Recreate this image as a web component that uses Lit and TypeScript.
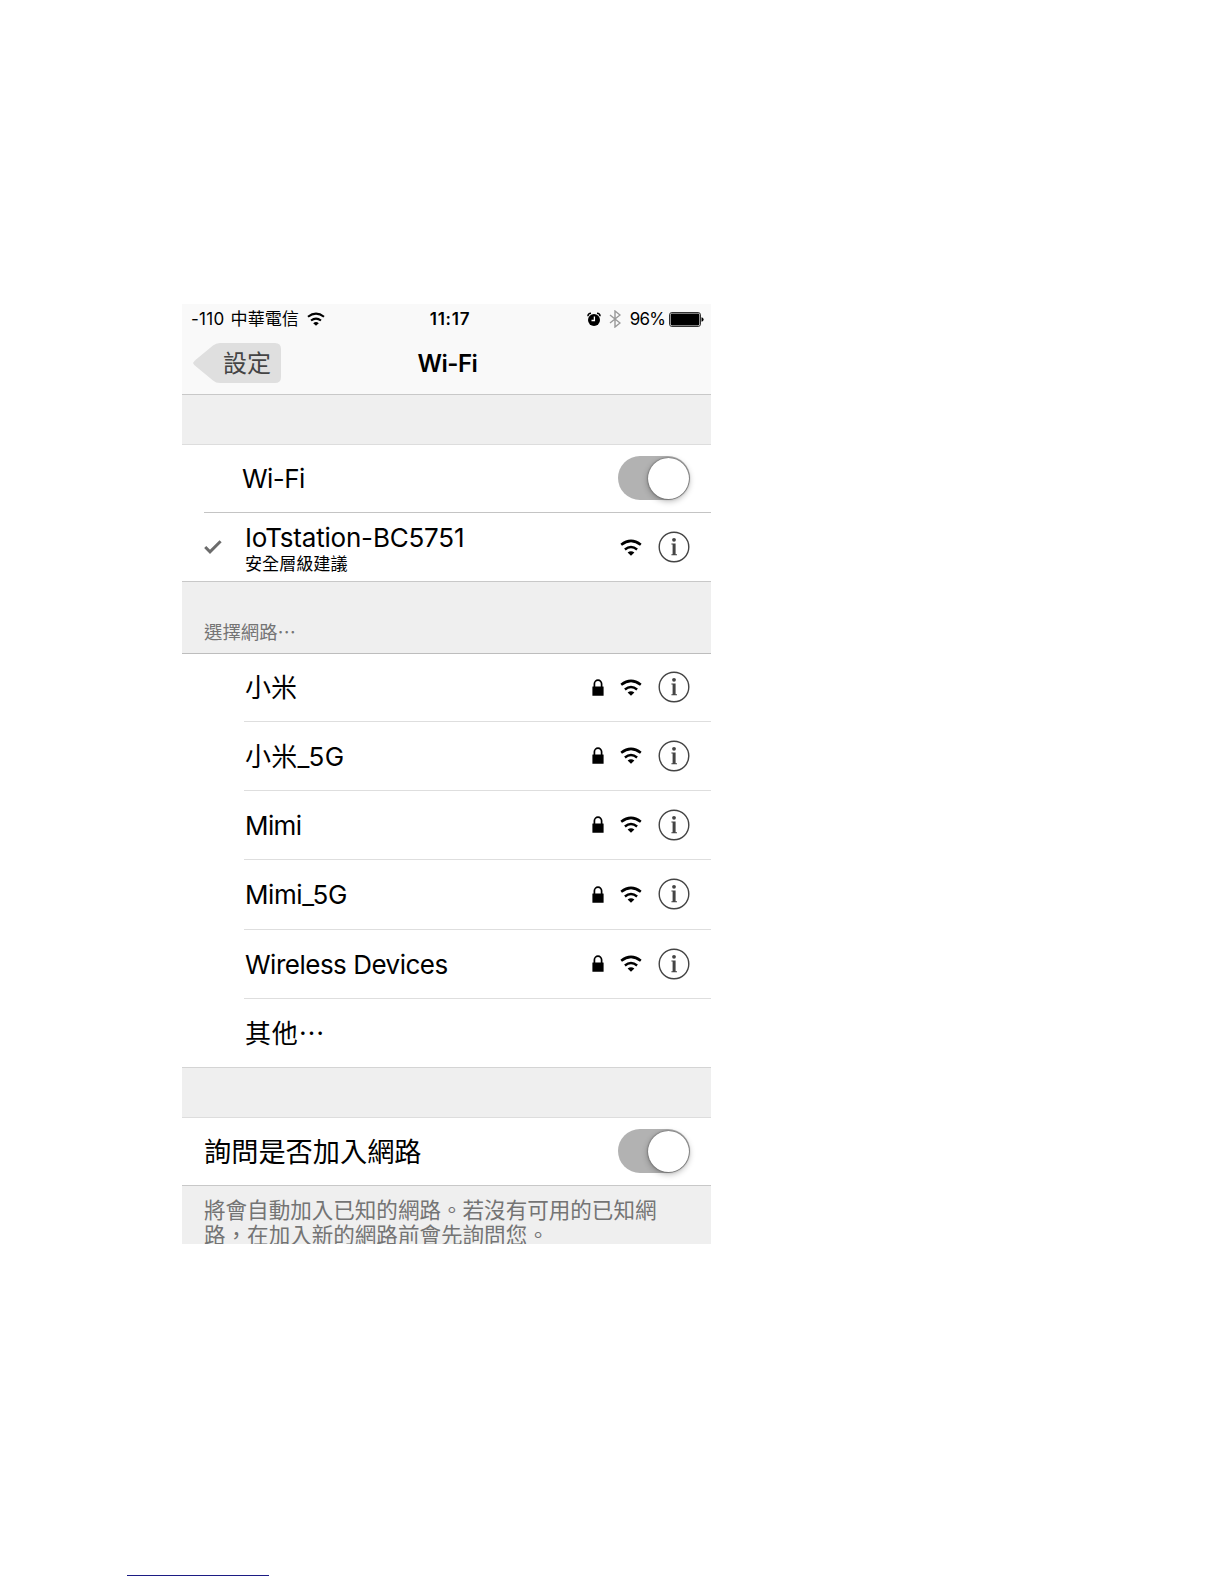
import { LitElement, html, css, svg, nothing } from "lit";
import { customElement } from "lit/decorators.js";

const wifiGlyph = svg`
  <path d="M1.2 5.8Q11 -2 20.8 5.8" fill="none" stroke="#000" stroke-width="2.5"/>
  <path d="M4.9 10.4Q11 5.6 17.1 10.4" fill="none" stroke="#000" stroke-width="2.5"/>
  <path d="M7.6 13.6Q11 10.8 14.4 13.6L11 16.8Z" fill="#000"/>`;

@customElement("toggle-switch")
class ToggleSwitch extends LitElement {
  static styles = css`
    :host { display: block; margin-bottom: 1px; }
    .track { display: flex; justify-content: flex-end; box-sizing: border-box; width: 72px; height: 44px; padding: 2px 1px 1px; border-radius: 22px; background: #b2b2b2; }
    .knob { width: 41px; height: 41px; border-radius: 50%; background: #fff; box-shadow: 0 2px 6px rgba(0,0,0,.3), 0 0 2px rgba(0,0,0,.6); }
  `;
  render() { return html`<div class="track"><div class="knob"></div></div>`; }
}

@customElement("network-row")
class NetworkRow extends LitElement {
  static properties = {
    name: {}, note: {}, track: { type: Number }, secure: { type: Boolean }, checked: { type: Boolean }, plain: { type: Boolean },
  };
  declare name: string;
  declare note: string;
  declare track: number;
  declare secure: boolean;
  declare checked: boolean;
  declare plain: boolean;
  static styles = css`
    :host { display: flex; align-items: center; box-sizing: border-box; padding-right: 21px; }
    svg { display: block; flex: none; }
    .mark { width: 63px; box-sizing: border-box; padding-left: 22px; }
    .label { flex: 1; display: flex; flex-direction: column; white-space: nowrap; font-size: 26px; line-height: 32px; padding-top: 1px; }
    .cjk { font-family: "Noto Sans CJK TC", sans-serif; padding-bottom: 3px; }
    .note { font-family: "Noto Sans CJK TC", sans-serif; font-size: 17.1px; line-height: 20px; margin-top: -1px; padding-bottom: 1px; }
    .icons { display: flex; align-items: center; }
    .secured { padding-bottom: 1px; }
    .lock { margin-right: 16px; }
    .wifi { margin-right: 16px; }
  `;
  render() {
    return html`
      <div class="mark">${this.checked ? html`<svg width="18" height="16" viewBox="0 0 18 16"><path d="M1.2 8L6 12.8L16.6 2.2" fill="none" stroke="#6c6c6c" stroke-width="3"/></svg>` : nothing}</div>
      <div class="label"><span class=${this.plain ? "cjk" : ""} style="letter-spacing:${this.track ?? 0}px">${this.name}</span>${this.note ? html`<span class="note">${this.note}</span>` : nothing}</div>
      ${this.plain ? nothing : html`<div class="icons ${this.secure ? "secured" : ""}">
        ${this.secure ? html`<svg class="lock" width="12" height="17" viewBox="0 0 12 17"><path d="M2.4 8V4.8a3.6 3.6 0 0 1 7.2 0V8" fill="none" stroke="#000" stroke-width="1.7"/><rect x=".4" y="7.4" width="11.2" height="9.4" rx=".4"/></svg>` : nothing}
        <svg class="wifi" width="22" height="17" viewBox="0 0 22 17">${wifiGlyph}</svg>
        <svg width="32" height="32" viewBox="0 0 32 32" fill="#444"><circle cx="16" cy="16" r="14.8" fill="none" stroke="#444" stroke-width="1.4"/><circle cx="16" cy="8.8" r="1.9"/><path d="M13.4 12.6h4.2v10.7h1.4v1h-5.6v-1h1.2v-9.7h-1.2z"/></svg>
      </div>`}`;
  }
}

@customElement("app-root")
class AppRoot extends LitElement {
  static styles = css`
    :host { display: flex; flex-direction: column; box-sizing: border-box; width: 1224px; height: 1584px; overflow: hidden; background: #fff; padding: 304px 0 8px; color: #000; font-family: Inter, "Noto Sans CJK TC", sans-serif; }
    * { box-sizing: border-box; }
    svg { display: block; flex: none; }
    .phone { width: 529px; height: 940px; margin-left: 182px; overflow: hidden; background: #efefef; white-space: nowrap; }
    .top { height: 91px; background: #f9f9f9; border-bottom: 1px solid #c8c8c8; }
    .status { height: 30px; display: grid; grid-template-columns: 1fr auto 1fr; align-items: center; padding: 0 7px 0 9px; font-size: 17px; line-height: 22px; }
    .carrier, .right { display: flex; align-items: center; }
    .rssi { letter-spacing: .3px; margin-right: 6px; }
    .operator { font-family: "Noto Sans CJK TC", sans-serif; font-size: 17.1px; line-height: 20px; padding-bottom: 2px; margin-right: 8px; }
    .time { font-weight: 600; letter-spacing: .75px; padding-left: 5px; }
    .right { justify-content: flex-end; }
    .alarm { margin-right: 8px; }
    .bt { margin-right: 9px; }
    .pct { margin-right: 4px; letter-spacing: -.85px; }
    .nav { height: 59px; display: grid; grid-template-columns: 1fr auto 1fr; align-items: center; padding: 0 11px; }
    .back { display: grid; width: 88px; height: 40px; margin-bottom: 1px; }
    .back > * { grid-area: 1 / 1; }
    .back span { padding-left: 30px; font-family: "Noto Sans CJK TC", sans-serif; font-size: 24px; line-height: 38px; color: #444; }
    .title { font-weight: 600; font-size: 24px; line-height: 30px; letter-spacing: -.5px; padding: 1px 0 0 2px; }
    .gap { height: 50px; border-bottom: 1px solid #ddd; }
    .main { display: flex; align-items: center; justify-content: space-between; background: #fff; padding-right: 21px; }
    .wifi-row { height: 67px; padding-left: 60px; font-size: 26px; letter-spacing: -.55px; }
    .sep { background: #fff; padding-left: 22px; }
    .sep div { height: 1px; background: #c4c4c4; }
    .joined { height: 69px; background: #fff; border-bottom: 1px solid #c8c8c8; }
    .heading { height: 72px; display: flex; align-items: flex-end; padding: 0 0 9px 22px; border-bottom: 1px solid #bdbdbd; color: #747474; font-family: "Noto Sans CJK TC", sans-serif; font-size: 18.4px; line-height: 26px; }
    .list { background: #fff; border-bottom: 1px solid #d4d4d4; display: grid; grid-template-rows: 68px 69px 69px 70px 69px 68px; height: 414px; }
    .item { display: grid; grid-template-rows: 1fr 1px; }
    .rule { margin-left: 62px; background: #dedede; }
    .item:last-child .rule { background: none; }
    .ask { height: 68px; border-bottom: 1px solid #c8c8c8; padding-left: 22px; font-family: "Noto Sans CJK TC", sans-serif; font-size: 27.2px; line-height: 36px; }
    .ask span { padding-bottom: 4px; }
    .foot { padding: 10px 0 0 22px; color: #747474; font-family: "Noto Sans CJK TC", sans-serif; font-size: 21.55px; line-height: 25px; }
    .link { width: 142px; height: 1px; margin: auto 0 0 127px; background: #1c1c84; }
  `;
  render() {
    const nets: [string, number][] = [["小米", 0], ["小米_5G", 0.3], ["Mimi", -0.6], ["Mimi_5G", -0.4], ["Wireless Devices", -0.5]];
    return html`
      <div class="phone" lang="zh-TW">
        <div class="top">
          <div class="status">
            <div class="carrier"><span class="rssi">-110</span><span class="operator">中華電信</span><svg width="18" height="14" viewBox="0 0 22 17">${wifiGlyph}</svg></div>
            <div class="time">11:17</div>
            <div class="right">
              <svg class="alarm" width="14" height="15" viewBox="0 0 14 15"><circle cx="7" cy="8" r="6"/><path d="M.9 4.2Q1 1.2 4 1.2M13.1 4.2Q13 1.2 10 1.2" fill="none" stroke="#000" stroke-width="1.4"/><path d="M7.4 4.5V8.5H4.5" fill="none" stroke="#fff" stroke-width="1.3"/></svg>
              <svg class="bt" width="12" height="18" viewBox="0 0 12 18"><path d="M1 5L11 13L6 17V1L11 5L1 13" fill="none" stroke="#999" stroke-width="1.4"/></svg>
              <span class="pct">96%</span>
              <svg width="35" height="15" viewBox="0 0 35 15"><rect x=".5" y=".5" width="31" height="14" rx="2.4" fill="none" stroke="#000" stroke-width=".8"/><rect x="1.6" y="1.6" width="28.8" height="11.8" rx="1.4"/><path d="M32.5 5.2Q34.6 5.5 34.6 7.5T32.5 9.8Z"/></svg>
            </div>
          </div>
          <div class="nav">
            <div class="back"><svg width="88" height="40" viewBox="0 0 88 40"><path d="M0 20Q1 18 3 16.5L20 2.5Q23 0 27 0H82Q88 0 88 6V34Q88 40 82 40H27Q23 40 20 37.5L3 23.5Q1 22 0 20Z" fill="#dfdfdf"/></svg><span>設定</span></div>
            <div class="title">Wi-Fi</div>
          </div>
        </div>
        <div class="gap"></div>
        <div class="main wifi-row"><span>Wi-Fi</span><toggle-switch></toggle-switch></div>
        <div class="sep"><div></div></div>
        <network-row class="joined" checked name="IoTstation-BC5751" track="-0.2" note="安全層級建議"></network-row>
        <div class="heading">選擇網路…</div>
        <div class="list">
          ${nets.map(([name, track]) => html`<div class="item"><network-row secure name=${name} track=${track}></network-row><div class="rule"></div></div>`)}
          <div class="item"><network-row plain name="其他…" track="0.7"></network-row><div class="rule"></div></div>
        </div>
        <div class="gap"></div>
        <div class="main ask"><span>詢問是否加入網路</span><toggle-switch></toggle-switch></div>
        <div class="foot">將會自動加入已知的網路。若沒有可用的已知網<br>路，在加入新的網路前會先詢問您。</div>
      </div>
      <div class="link"></div>`;
  }
}
